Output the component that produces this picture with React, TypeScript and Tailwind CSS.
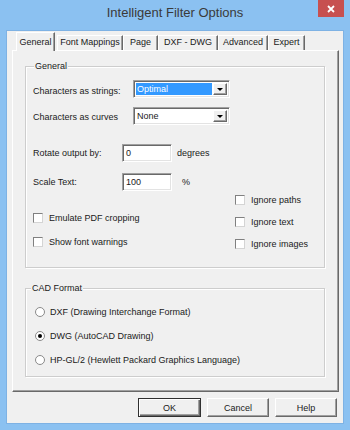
import React from 'react';

const raised =
  'border border-t-white border-l-white border-r-[#696969] border-b-[#696969] shadow-[inset_-1px_-1px_0_#a0a0a0]';
const sunken =
  'border border-t-[#a0a0a0] border-l-[#a0a0a0] border-r-white border-b-white shadow-[inset_1px_1px_0_#696969,inset_-1px_-1px_0_#e3e3e3] bg-white';

const tabs = [
  { label: 'Font Mappings', w: 'w-[66px]' },
  { label: 'Page', w: 'w-[35px]' },
  { label: 'DXF - DWG', w: 'w-[60px]' },
  { label: 'Advanced', w: 'w-[50px]' },
  { label: 'Expert', w: 'w-[37px]' },
];

function Combo({ value, highlight }: { value: string; highlight?: boolean }) {
  return (
    <div className={`flex h-[18px] w-[97px] items-stretch p-[2px] ${sunken}`}>
      <div
        className={`flex flex-1 items-center pl-[1px] ${highlight ? 'bg-[#3399ff] text-white' : 'text-[#1a1a1a]'}`}
      >
        {value}
      </div>
      <div className={`ml-[1px] flex w-[14px] items-center justify-center bg-[#f0f0f0] ${raised}`}>
        <svg width="6" height="3" viewBox="0 0 6 3">
          <path d="M0 0h6L3 3z" fill="#000" />
        </svg>
      </div>
    </div>
  );
}

function Edit({ value }: { value: string }) {
  return (
    <div className={`flex h-[18px] w-[50px] items-center pl-[3px] ${sunken}`}>{value}</div>
  );
}

function Check({ label }: { label: string }) {
  return (
    <div className="flex h-[22px] items-center">
      <div className="h-[10px] w-[10px] border border-t-[#808080] border-l-[#808080] border-r-[#d4d4d4] border-b-[#d4d4d4] bg-white" />
      <span className="ml-[6px]">{label}</span>
    </div>
  );
}

function Radio({ label, checked }: { label: string; checked?: boolean }) {
  return (
    <div className="flex h-[24px] items-center">
      <div className="flex h-[10px] w-[10px] items-center justify-center rounded-full border border-[#8a8a8a] bg-white">
        {checked && <div className="h-[4px] w-[4px] rounded-full bg-black" />}
      </div>
      <span className="ml-[5px]">{label}</span>
    </div>
  );
}

function Button({ label, isDefault }: { label: string; isDefault?: boolean }) {
  return (
    <button
      className={`flex h-[19px] items-center justify-center bg-[#f0f0f0] ${
        isDefault
          ? 'w-[63px] border border-[#303030] shadow-[inset_1px_1px_0_#fff,inset_-1px_-1px_0_#696969,inset_-2px_-2px_0_#a0a0a0]'
          : `w-[62px] ${raised}`
      }`}
    >
      {label}
    </button>
  );
}

export default function App() {
  return (
    <div className="flex h-[430px] w-[350px] flex-col bg-[#8bc1f1] font-['Liberation_Sans',Arial,sans-serif] text-[9px] leading-[12px] text-[#1a1a1a]">
      {/* Title bar */}
      <div className="relative flex h-[31px] justify-center pt-[5px]">
        <span className="text-[13px] leading-[16px] text-[#3a3a3a]">Intelligent Filter Options</span>
        <div className="absolute right-[6px] top-0 flex h-[17px] w-[26px] items-center justify-center bg-[#c75050]">
          <svg width="8" height="8" viewBox="0 0 8 8">
            <path d="M1 1l6 6M7 1l-6 6" stroke="#fff" strokeWidth="1.8" />
          </svg>
        </div>
      </div>

      {/* Client area */}
      <div className="mx-[7px] flex h-[392px] flex-col bg-[#f0f0f0] shadow-[0_0_0_1px_#7eb2e4]">
        {/* Tabs */}
        <div className="flex h-[19px] items-end pl-[9px]">
          <div className="relative z-10 -mb-px h-[19px] w-[39px] border-l border-t border-r border-l-white border-t-white border-r-[#696969] bg-[#f0f0f0] pt-[3px] text-center shadow-[inset_-1px_0_0_#a0a0a0]">
            General
          </div>
          <div className="ml-[2px] flex">
            {tabs.map((t) => (
              <div
                key={t.label}
                className={`h-[15px] ${t.w} border-l border-t border-r border-l-white border-t-white border-r-[#696969] text-center shadow-[inset_-1px_0_0_#a0a0a0]`}
              >
                {t.label}
              </div>
            ))}
          </div>
        </div>

        {/* Panel */}
        <div className="ml-[5px] flex h-[342px] w-[327px] flex-col border border-l-white border-t-white border-r-[#696969] border-b-[#696969] pl-[12px] pt-[15px] shadow-[inset_-1px_-1px_0_#a0a0a0]">
          {/* General group */}
          <div className="relative flex h-[202px] w-[300px] border border-[#cdcdcd] shadow-[inset_1px_1px_0_#fff,1px_1px_0_#fff]">
            <span className="absolute -top-[7px] left-[8px] bg-[#f0f0f0] px-[1px]">General</span>

            <div className="flex w-[209px] flex-col pl-[7px]">
              <div className="mt-[13px] flex h-[18px] items-center">
                <span className="w-[100px] pt-[4px]">Characters as strings:</span>
                <Combo value="Optimal" highlight />
              </div>
              <div className="mt-[9px] flex h-[18px] items-center">
                <span className="w-[100px] pt-[2px]">Characters as curves</span>
                <Combo value="None" />
              </div>
              <div className="mt-[19px] flex h-[18px] items-center">
                <span className="w-[89px]">Rotate output by:</span>
                <Edit value="0" />
                <span className="ml-[5px]">degrees</span>
              </div>
              <div className="mt-[11px] flex h-[18px] items-center">
                <span className="w-[89px]">Scale Text:</span>
                <Edit value="100" />
                <span className="ml-[10px]">%</span>
              </div>
              <div className="mt-[15px] flex flex-col">
                <div className="flex h-[24px] items-center">
                  <Check label="Emulate PDF cropping" />
                </div>
                <div className="flex h-[24px] items-center">
                  <Check label="Show font warnings" />
                </div>
              </div>
            </div>

            <div className="mt-[122px] flex flex-col">
              <Check label="Ignore paths" />
              <Check label="Ignore text" />
              <Check label="Ignore images" />
            </div>
          </div>

          {/* CAD Format group */}
          <div className="relative mt-[20px] flex h-[89px] w-[300px] flex-col border border-[#cdcdcd] pl-[9px] pt-[11px] shadow-[inset_1px_1px_0_#fff,1px_1px_0_#fff]">
            <span className="absolute -top-[7px] left-[5px] bg-[#f0f0f0] px-[1px]">CAD Format</span>
            <Radio label="DXF (Drawing Interchange Format)" />
            <Radio label="DWG (AutoCAD Drawing)" checked />
            <Radio label="HP-GL/2 (Hewlett Packard Graphics Language)" />
          </div>
        </div>

        {/* Buttons */}
        <div className="mt-[6px] flex justify-end gap-[6px] pr-[6px]">
          <Button label="OK" isDefault />
          <Button label="Cancel" />
          <Button label="Help" />
        </div>
      </div>
    </div>
  );
}
